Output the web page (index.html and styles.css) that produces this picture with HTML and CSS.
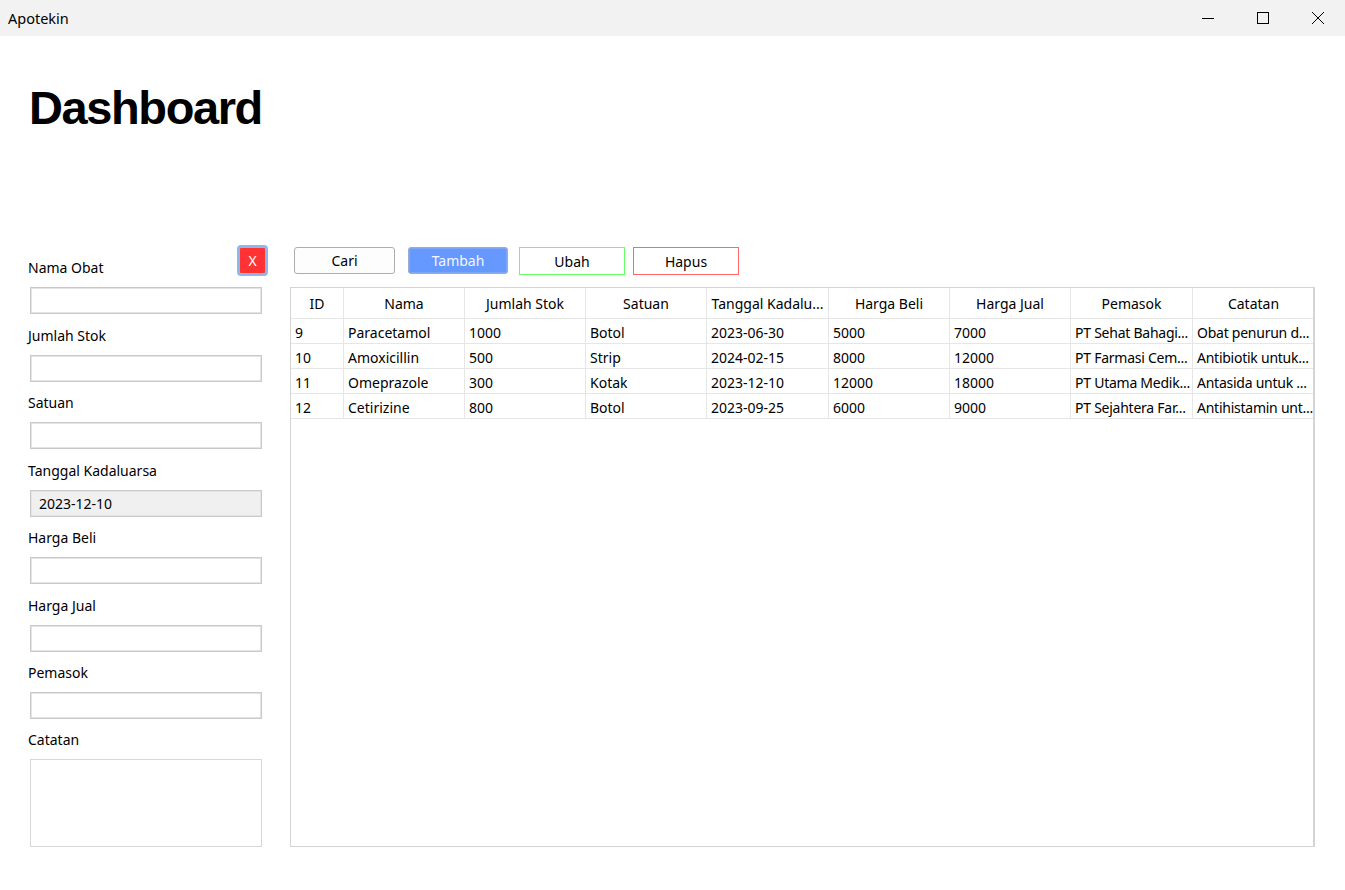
FILE: index.html
```html
<!DOCTYPE html>
<html lang="id">
<head>
<meta charset="utf-8">
<title>Apotekin</title>
<link rel="stylesheet" href="styles.css">
</head>
<body>
<div class="window">
  <header class="titlebar">
    <span class="app-name">Apotekin</span>
    <div class="controls">
      <span class="ctl"><svg width="14" height="14" viewBox="0 0 14 14"><path d="M1 7.5h12" stroke="#000" stroke-width="1" fill="none"/></svg></span>
      <span class="ctl"><svg width="14" height="14" viewBox="0 0 14 14"><rect x="1.5" y="1.5" width="11" height="11" stroke="#000" stroke-width="1" fill="none"/></svg></span>
      <span class="ctl"><svg width="14" height="14" viewBox="0 0 14 14"><path d="M1 1l12 12M13 1L1 13" stroke="#000" stroke-width="1" fill="none"/></svg></span>
    </div>
  </header>

  <main class="content">
    <h1 class="page-title">Dashboard</h1>

    <section class="workspace">
      <form class="side-form">
        <div class="first-row">
          <label class="field-label first">Nama Obat</label>
          <button type="button" class="close-btn">X</button>
        </div>
        <div class="input"></div>

        <label class="field-label">Jumlah Stok</label>
        <div class="input"></div>

        <label class="field-label">Satuan</label>
        <div class="input"></div>

        <label class="field-label">Tanggal Kadaluarsa</label>
        <div class="input date">2023-12-10</div>

        <label class="field-label">Harga Beli</label>
        <div class="input"></div>

        <label class="field-label">Harga Jual</label>
        <div class="input"></div>

        <label class="field-label">Pemasok</label>
        <div class="input"></div>

        <label class="field-label last">Catatan</label>
        <div class="input textarea"></div>
      </form>

      <div class="main-col">
        <div class="actions">
          <button type="button" class="btn btn-cari">Cari</button>
          <button type="button" class="btn btn-tambah">Tambah</button>
          <button type="button" class="btn btn-ubah">Ubah</button>
          <button type="button" class="btn btn-hapus">Hapus</button>
        </div>

        <div class="grid">
          <div class="row head">
            <div class="cell">ID</div>
            <div class="cell">Nama</div>
            <div class="cell">Jumlah Stok</div>
            <div class="cell">Satuan</div>
            <div class="cell">Tanggal Kadalu...</div>
            <div class="cell">Harga Beli</div>
            <div class="cell">Harga Jual</div>
            <div class="cell">Pemasok</div>
            <div class="cell">Catatan</div>
          </div>
          <div class="row">
            <div class="cell">9</div>
            <div class="cell">Paracetamol</div>
            <div class="cell">1000</div>
            <div class="cell">Botol</div>
            <div class="cell">2023-06-30</div>
            <div class="cell">5000</div>
            <div class="cell">7000</div>
            <div class="cell tight">PT Sehat Bahagi...</div>
            <div class="cell tight">Obat penurun d...</div>
          </div>
          <div class="row">
            <div class="cell">10</div>
            <div class="cell">Amoxicillin</div>
            <div class="cell">500</div>
            <div class="cell">Strip</div>
            <div class="cell">2024-02-15</div>
            <div class="cell">8000</div>
            <div class="cell">12000</div>
            <div class="cell tight">PT Farmasi Cem...</div>
            <div class="cell tight">Antibiotik untuk...</div>
          </div>
          <div class="row">
            <div class="cell">11</div>
            <div class="cell">Omeprazole</div>
            <div class="cell">300</div>
            <div class="cell">Kotak</div>
            <div class="cell">2023-12-10</div>
            <div class="cell">12000</div>
            <div class="cell">18000</div>
            <div class="cell tight">PT Utama Medik...</div>
            <div class="cell tight">Antasida untuk ...</div>
          </div>
          <div class="row">
            <div class="cell">12</div>
            <div class="cell">Cetirizine</div>
            <div class="cell">800</div>
            <div class="cell">Botol</div>
            <div class="cell">2023-09-25</div>
            <div class="cell">6000</div>
            <div class="cell">9000</div>
            <div class="cell tight">PT Sejahtera Far...</div>
            <div class="cell tight">Antihistamin unt...</div>
          </div>
        </div>
      </div>
    </section>
  </main>
</div>
</body>
</html>
```

FILE: styles.css
```css
* { box-sizing: border-box; }

html, body {
  margin: 0;
  padding: 0;
  background: #ffffff;
  width: 1345px;
  height: 890px;
  overflow: hidden;
  font-family: "Noto Sans", "Open Sans", sans-serif;
  color: #000;
}

.window {
  display: flex;
  flex-direction: column;
  height: 890px;
}

.titlebar {
  height: 36px;
  background: #f2f2f2;
  display: flex;
  align-items: center;
  justify-content: space-between;
  padding-left: 8px;
}

.app-name {
  font-size: 14.5px;
  line-height: 20px;
  margin-top: -1px;
}

.controls {
  display: flex;
  height: 36px;
}

.ctl {
  width: 55px;
  height: 36px;
  display: flex;
  align-items: center;
  justify-content: center;
}

.content {
  padding: 0 0 0 28px;
  flex: 1;
}

.page-title {
  margin: 44px 0 0 1px;
  font-family: "Liberation Sans", Arial, sans-serif;
  font-weight: 700;
  font-size: 47px;
  line-height: 56px;
  letter-spacing: -1.4px;
}

.workspace {
  display: flex;
  margin-top: 109px;
}

.side-form {
  width: 240px;
  display: flex;
  flex-direction: column;
}

.first-row {
  display: flex;
  justify-content: space-between;
  align-items: flex-start;
  height: 33px;
  flex: none;
}

.field-label {
  font-size: 14px;
  line-height: 20px;
  height: 20px;
  margin-top: 11.5px;
  flex: none;
}

.field-label.first {
  margin-top: 13px;
}

.field-label.last {
  margin-top: 10.5px;
}

.close-btn {
  flex: none;
  width: 31px;
  height: 31px;
  border: 3px solid #8fb8e8;
  border-radius: 4px;
  background: #ff3333;
  color: #fff;
  font-family: "Noto Sans", sans-serif;
  font-size: 14px;
  padding: 0;
  line-height: 23px;
}

.input {
  flex: none;
  margin-top: 9px;
  margin-left: 2px;
  width: 232px;
  height: 27px;
  border: 1px solid #c9c9c9;
  box-shadow: inset 0 0 0 1px #e4e4e4;
  background: #fff;
  font-size: 14px;
  line-height: 25px;
  padding-left: 8px;
}

.input.date {
  background: #f0f0f0;
}

.input.textarea {
  height: 88px;
  margin-top: 9px;
  border-color: #d7d7d7;
  box-shadow: none;
}

.main-col {
  margin-left: 22px;
  display: flex;
  flex-direction: column;
}

.actions {
  display: flex;
  margin-top: 2px;
  height: 28px;
  align-items: flex-start;
}

.btn {
  height: 27px;
  font-family: "Noto Sans", sans-serif;
  font-size: 14px;
  padding: 0;
  color: #000;
  background: #fff;
}

.btn-cari {
  margin-left: 4px;
  width: 101px;
  border: 1px solid #adadad;
  border-radius: 3px;
  background: #fdfdfd;
}

.btn-tambah {
  margin-left: 13px;
  width: 100px;
  border: 1px solid #9aaad0;
  border-radius: 3px;
  background: #6699ff;
  color: #f4f6ff;
  box-shadow: inset 0 0 0 1px #7fa6f0;
}

.btn-ubah {
  margin-left: 11px;
  width: 106px;
  height: 28px;
  border: 1px solid #66ff66;
}

.btn-hapus {
  margin-left: 8px;
  width: 106px;
  height: 28px;
  border: 1px solid #ff6666;
}

.grid {
  margin-top: 12px;
  width: 1025px;
  height: 560px;
  border: 1px solid #d4d4d4;
  border-right: 2px solid #d4d4d4;
  display: flex;
  flex-direction: column;
  background: #fff;
}

.row {
  display: grid;
  grid-template-columns: 53px 121px 121px 121px 122px 121px 121px 122px 121px;
  height: 25px;
  border-bottom: 1px solid #e6e6e6;
  flex: none;
}

.row.head {
  height: 31px;
  border-bottom: 1px solid #e6e6e6;
}

.cell {
  border-right: 1px solid #e6e6e6;
  font-size: 14px;
  line-height: 24px;
  padding: 2px 0 0 4px;
  white-space: nowrap;
  overflow: hidden;
}

.cell.tight {
  letter-spacing: -0.25px;
}

.cell:last-child {
  border-right: none;
}

.head .cell {
  text-align: center;
  padding: 1px 0 0 0;
  line-height: 29px;
}
```
